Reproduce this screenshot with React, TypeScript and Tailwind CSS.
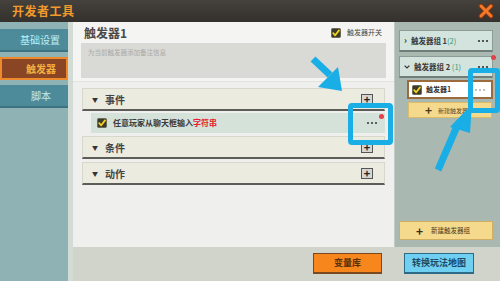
import React from "react";

const Check = ({ size = 10 }: { size?: number }) => (
  <svg width={size} height={size} viewBox="0 0 10 10" className="shrink-0">
    <rect x="0.5" y="0.5" width="9" height="9" rx="1" fill="#3b3a2c" stroke="#6b6a55" />
    <path d="M2.2 5.2 L4.2 7.3 L8 2.4" fill="none" stroke="#f2d21e" strokeWidth="1.8" strokeLinecap="round" strokeLinejoin="round" />
  </svg>
);

const PlusBox = () => (
  <div className="w-[12px] h-[11px] bg-[#d6d6d2] border border-[#555] flex items-center justify-center text-[11px] leading-none font-bold text-[#222]">
    +
  </div>
);

const Section = ({ label }: { label: string }) => (
  <div className="h-[23px] bg-[#ecebdf] border border-[#d8d7cb] border-b-2 border-b-[#5c5c58] flex items-center pl-[9px] pr-[11px]">
    <span className="text-[6px] text-[#333] mr-[7px]">▼</span>
    <span className="text-[10px] font-bold text-[#444]">{label}</span>
    <div className="ml-auto">
      <PlusBox />
    </div>
  </div>
);

const Dots = ({ color = "#333", r = 1.1 }: { color?: string; r?: number }) => (
  <svg width="12" height="4" viewBox="0 0 12 4" className="shrink-0">
    <circle cx="2" cy="2" r={r} fill={color} />
    <circle cx="6" cy="2" r={r} fill={color} />
    <circle cx="10" cy="2" r={r} fill={color} />
  </svg>
);

export default function App() {
  return (
    <div className="relative w-[500px] h-[281px] overflow-hidden bg-[#d0d4cb] font-['Noto_Sans_CJK_SC',sans-serif]">
      {/* header */}
      <div className="h-[22px] bg-gradient-to-b from-[#45413c] to-[#34312d] flex items-center pl-[12px] pr-[6px]">
        <span className="text-[12px] font-bold text-[#f39a2c] tracking-[0.5px]">开发者工具</span>
        <svg width="16" height="16" viewBox="0 0 16 16" className="ml-auto mb-[1px]">
          <path d="M3 3 L13 13 M13 3 L3 13" stroke="#7a3412" strokeWidth="5" strokeLinecap="round" />
          <path d="M3 3 L13 13 M13 3 L3 13" stroke="#f6782a" strokeWidth="3" strokeLinecap="round" />
        </svg>
      </div>

      <div className="flex h-[259px]">
        {/* sidebar */}
        <div className="w-[68px] bg-[#8fb3b5] pt-[7px] flex flex-col gap-[5px]">
          <div className="h-[23px] bg-[#4e8b9a] border-b-2 border-[#3d7280] flex items-center justify-end pr-[8px] text-[10px] text-[#bfeef2]">
            基础设置
          </div>
          <div className="h-[23px] bg-[#8a4624] border-2 border-[#ee8a2c] flex items-center justify-center pl-[14px] text-[10px] font-bold text-[#f4b040]">
            触发器
          </div>
          <div className="h-[23px] bg-[#4e8b9a] border-b-2 border-[#3d7280] flex items-center justify-center pl-[14px] text-[10px] text-[#bfeef2]">
            脚本
          </div>
        </div>
        <div className="w-[5px] bg-[#d3dbd5]" />

        <div className="flex-1 flex flex-col">
          <div className="flex h-[225px]">
            {/* main panel */}
            <div className="w-[321px] bg-[#eff0ed] flex flex-col">
              <div className="bg-[#f4f4f2] border-b border-[#e2e2de] pb-[3px]">
                <div className="h-[21px] flex items-center pl-[11px] pr-[12px]">
                  <span className="text-[12px] font-bold text-[#4a4a4a]">触发器1</span>
                  <div className="ml-auto flex items-center gap-[6px]">
                    <Check />
                    <span className="text-[7px] text-[#444]">触发器开关</span>
                  </div>
                </div>
                <div className="mx-[8px] h-[35px] bg-[#d9dad6] pl-[7px] pt-[5px] text-[6.5px] text-[#a9a9a6]">
                  为当前触发器添加备注信息
                </div>
              </div>
              <div className="px-[9px] pt-[6px] flex flex-col gap-[3px]">
                <Section label="事件" />
                <div className="relative ml-[9px] h-[20px] -mt-[1px] bg-[#d4e2da] flex items-center pl-[6px] pr-[7px]">
                  <Check />
                  <span className="ml-[6px] text-[8px] font-bold text-[#3a3a3a]">
                    任意玩家从聊天框输入<span className="text-[#e8202a]">字符串</span>
                  </span>
                  <div className="ml-auto">
                    <Dots color="#333" r={1} />
                  </div>
                  <div className="absolute right-[1px] top-[1px] w-[5px] h-[5px] rounded-full bg-[#e2404a]" />
                </div>
                <Section label="条件" />
                <Section label="动作" />
              </div>
            </div>

            {/* right panel */}
            <div className="flex-1 bg-[#a9b8b0] border-l border-[#c2ccc5] pt-[8px] pl-[4px] pr-[7px] pb-[7px] flex flex-col">
              <div className="h-[22px] bg-[#d3e3dd] border border-[#8c9c96] border-b-2 border-b-[#6f7e78] flex items-center pl-[4px] pr-[3px] whitespace-nowrap">
                <span className="text-[9px] font-bold text-[#333] mr-[4px] leading-none">›</span>
                <span className="text-[7.5px] font-bold text-[#3a3a3a]">
                  触发器组 1<span className="text-[#2a9a7c] font-normal">(2)</span>
                </span>
                <div className="ml-auto">
                  <Dots />
                </div>
              </div>
              <div className="relative mt-[4px] h-[22px] bg-[#d3e3dd] border border-[#8c9c96] border-b-2 border-b-[#6f7e78] flex items-center pl-[4px] pr-[3px] whitespace-nowrap">
                <svg width="6" height="4" viewBox="0 0 6 4" className="mr-[4px] shrink-0">
                  <path d="M0.6 0.6 L3 3 L5.4 0.6" fill="none" stroke="#333" strokeWidth="1.2" />
                </svg>
                <span className="text-[7.5px] font-bold text-[#3a3a3a]">
                  触发器组 2 <span className="text-[#2a9a7c] font-normal">(1)</span>
                </span>
                <div className="ml-auto">
                  <Dots />
                </div>
                <div className="absolute -right-[4px] -top-[2px] w-[5px] h-[5px] rounded-full bg-[#e2404a]" />
              </div>
              <div className="ml-[8px] mt-[2px] h-[19px] bg-white border-2 border-[#9b6b3e] flex items-center pl-[3px] pr-[5px] whitespace-nowrap">
                <Check />
                <span className="ml-[4px] text-[7px] font-bold text-[#333]">触发器1</span>
                <div className="ml-auto">
                  <Dots color="#555" r={0.7} />
                </div>
              </div>
              <div className="ml-[9px] mr-[1px] mt-[3px] h-[16px] bg-[#f5d98c] border border-[#d9bb6a] flex items-center pl-[16px] whitespace-nowrap">
                <span className="text-[12px] font-bold text-[#4a3a20] leading-none">+</span>
                <span className="ml-[6px] text-[6px] text-[#5a4a30]">新建触发器</span>
              </div>
              <div className="mt-auto h-[19px] bg-[#f5d98c] border border-[#d0b060] flex items-center pl-[16px] whitespace-nowrap">
                <span className="text-[12px] font-bold text-[#3a2e18] leading-none">+</span>
                <span className="ml-[8px] text-[6.5px] text-[#4a3a20]">新建触发器组</span>
              </div>
            </div>
          </div>

          {/* footer */}
          <div className="flex-1 bg-[#d0d4cb] flex justify-end items-start pt-[6px] pr-[26px] gap-[22px]">
            <div className="w-[69px] h-[21px] bg-[#f7861c] border border-[#7a4a1e] border-b-2 flex items-center justify-center text-[9px] font-bold text-[#5a2f0c]">
              变量库
            </div>
            <div className="w-[70px] h-[21px] bg-[#70d0f2] border border-[#2c6a88] border-b-2 flex items-center justify-center text-[9px] font-bold text-[#1b4a66]">
              转换玩法地图
            </div>
          </div>
        </div>
      </div>

      {/* annotations */}
      <div className="absolute left-[348px] top-[103px] w-[45px] h-[42px] border-[5px] border-[#19aee6] rounded-[4px]" />
      <div className="absolute left-[468px] top-[68px] w-[32px] h-[45px] border-[5px] border-[#19aee6] rounded-[4px]" />
      <svg className="absolute left-0 top-0 pointer-events-none" width="500" height="281">
        <path d="M313 59 L330 75" stroke="#19aee6" strokeWidth="7" />
        <polygon points="318,87 338,67 342,91" fill="#19aee6" />
        <path d="M438 170 L458 124" stroke="#19aee6" strokeWidth="7" />
        <polygon points="450,127 472,104 470,133" fill="#19aee6" />
      </svg>
    </div>
  );
}
